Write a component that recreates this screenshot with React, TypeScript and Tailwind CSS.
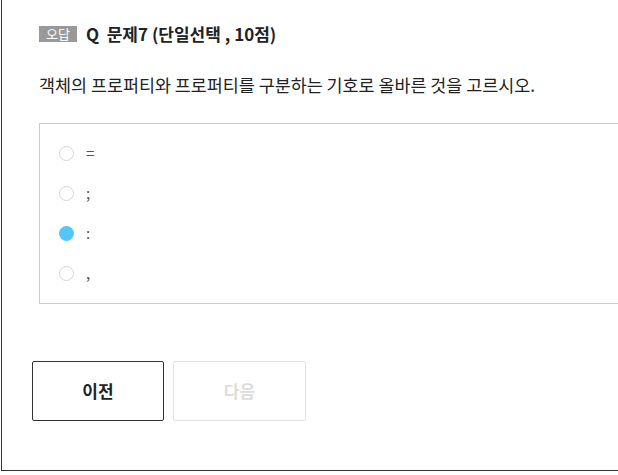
import React from "react";

const opts = ["=", ";", ":", ","];

export default function App() {
  return (
    <div className="w-[618px] h-[475px] bg-white overflow-hidden" style={{ fontFamily: '"Noto Sans CJK KR", "Noto Sans", sans-serif' }}>
      <div className="ml-px w-[700px] h-[471px] border-l border-b border-[#333] pl-[37px] pt-[25px]">
        <div className="flex items-center h-[17px]">
          <span className="bg-[#999] text-white text-[13px] leading-[16px] px-[7px] h-[16px] mr-[9px] flex items-center">오답</span>
          <span className="text-[17px] font-bold text-[#222] leading-[17px]">Q&nbsp;&nbsp;문제7 (단일선택 , 10점)</span>
        </div>
        <p className="mt-[31px] text-[17.4px] text-[#222] leading-[24px]">객체의 프로퍼티와 프로퍼티를 구분하는 기호로 올바른 것을 고르시오.</p>
        <div className="mt-[26px] border border-[#ccc] h-[181px] pl-[19px] pt-[21px] flex flex-col gap-[24px]">
          {opts.map((o, i) => (
            <div key={i} className="flex items-center h-[16px]">
              {i === 2 ? (
                <span className="w-[15px] h-[15px] rounded-full bg-[#52c7fb]" />
              ) : (
                <span className="w-[15px] h-[15px] rounded-full border border-[#d5d5d5] bg-white" />
              )}
              <span className="ml-[12px] text-[15px] text-[#555] leading-[16px]">{o}</span>
            </div>
          ))}
        </div>
        <div className="mt-[57px] -ml-[7px] flex gap-[9px]">
          <button className="w-[132px] h-[60px] border border-[#333] rounded-[2px] bg-white text-[17px] font-bold text-[#222]">이전</button>
          <button className="w-[133px] h-[60px] border border-[#e3e3e3] rounded-[2px] bg-white text-[17px] font-bold text-[#ddd]">다음</button>
        </div>
      </div>
    </div>
  );
}
